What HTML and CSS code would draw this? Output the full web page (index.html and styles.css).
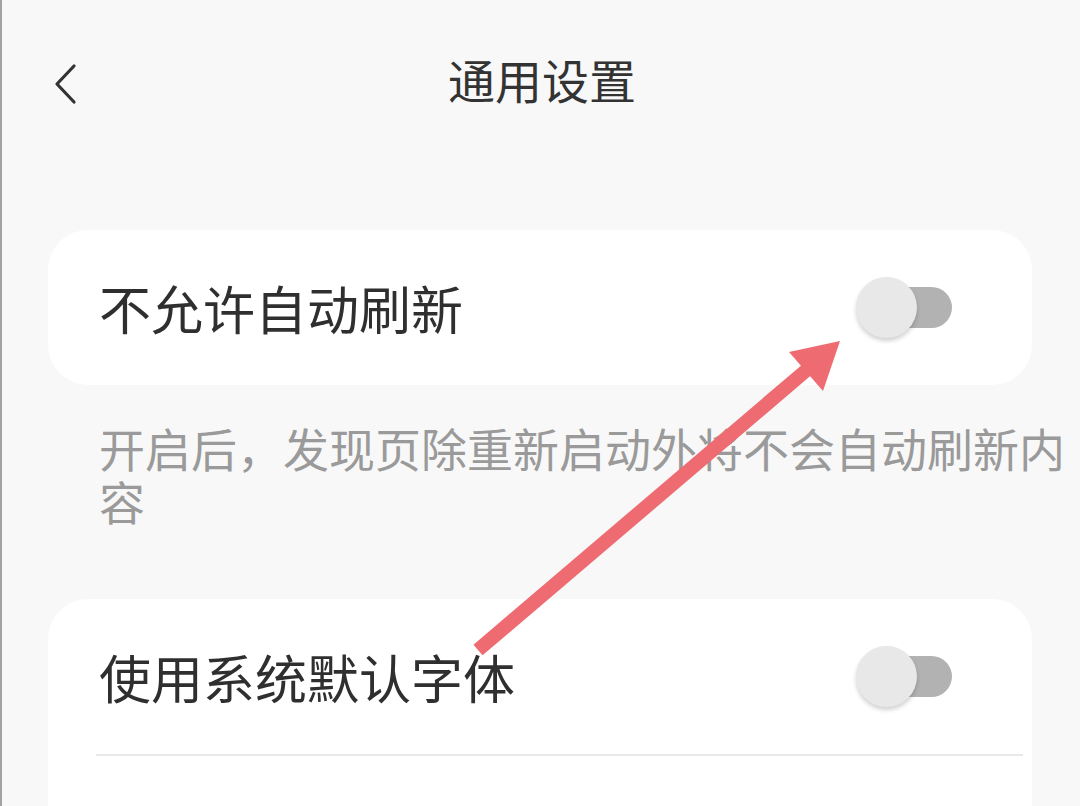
FILE: index.html
```html
<!DOCTYPE html>
<html lang="zh-CN">
<head>
<meta charset="utf-8">
<title>通用设置</title>
<link rel="stylesheet" href="styles.css">
</head>
<body>
<div class="screen">
  <header class="topbar">
    <span class="back">
      <svg width="30" height="44" viewBox="0 0 30 44"><polyline points="21,4 4,22 21,40" fill="none" stroke="#333" stroke-width="3.2" stroke-linecap="round" stroke-linejoin="round"/></svg>
    </span>
    <h1 class="title">通用设置</h1>
  </header>

  <section class="card">
    <div class="row">
      <span class="label">不允许自动刷新</span>
      <span class="switch"><span class="track"></span><span class="thumb"></span></span>
    </div>
  </section>

  <p class="desc">开启后，发现页除重新启动外将不会自动刷新内容</p>

  <section class="card">
    <div class="row">
      <span class="label">使用系统默认字体</span>
      <span class="switch"><span class="track"></span><span class="thumb"></span></span>
    </div>
    <div class="divider"></div>
    <div class="row"></div>
  </section>

  <svg class="arrow" width="1080" height="806" viewBox="0 0 1080 806">
    <line x1="478" y1="650" x2="809" y2="368" stroke="#ee6b72" stroke-width="14"/>
    <polygon points="840,341 789,352 823,391" fill="#ee6b72"/>
  </svg>
</div>
</body>
</html>
```

FILE: styles.css
```css
* { box-sizing: border-box; }
html, body {
  margin: 0;
  padding: 0;
  background: #f8f8f8;
  overflow: hidden;
}
body {
  font-family: "Noto Sans CJK SC", "Noto Sans", sans-serif;
  color: #2f2f2f;
}
.screen {
  position: relative;
  width: 1080px;
  height: 806px;
  overflow: hidden;
  border-left: 2px solid #a3a3a3;
  background: #f8f8f8;
  padding: 0 48px 0 46px;
}
.topbar {
  height: 166px;
  padding-bottom: 10px;
  display: flex;
  align-items: center;
  justify-content: center;
  position: relative;
}
.back {
  position: absolute;
  left: 5px;
  top: 62px;
  width: 30px;
  height: 44px;
  display: block;
}
.back svg { display: block; }
.title {
  margin: 0;
  font-size: 47px;
  font-weight: 400;
  color: #333;
  letter-spacing: 0;
  padding-left: 4px;
}
.card {
  margin-top: 64px;
  background: #fff;
  border-radius: 40px;
  padding: 0 80px 0 51px;
}
.row {
  height: 155px;
  display: flex;
  align-items: center;
  justify-content: space-between;
}
.label {
  font-size: 52px;
  color: #2f2f2f;
  line-height: 1;
}
.switch {
  position: relative;
  width: 96px;
  height: 62px;
  display: block;
}
.track {
  position: absolute;
  right: 0;
  top: 10px;
  width: 74px;
  height: 41px;
  border-radius: 21px;
  background: #b2b2b2;
}
.thumb {
  position: absolute;
  left: 0;
  top: 0;
  width: 61px;
  height: 61px;
  border-radius: 50%;
  background: #e8e8e8;
  box-shadow: 0 3px 4px rgba(0,0,0,0.18);
}
.desc {
  margin: 0;
  padding: 36px 0 72px 51px;
  margin-right: -40px;
  font-size: 46px;
  line-height: 53px;
  color: #9a9a9a;
}
.card + .desc + .card { margin-top: 0; }
.divider {
  height: 2px;
  background: #e8e8e8;
  margin: 0 -71px 0 -3px;
}
.arrow {
  position: absolute;
  left: -2px;
  top: 0;
  pointer-events: none;
}
```
